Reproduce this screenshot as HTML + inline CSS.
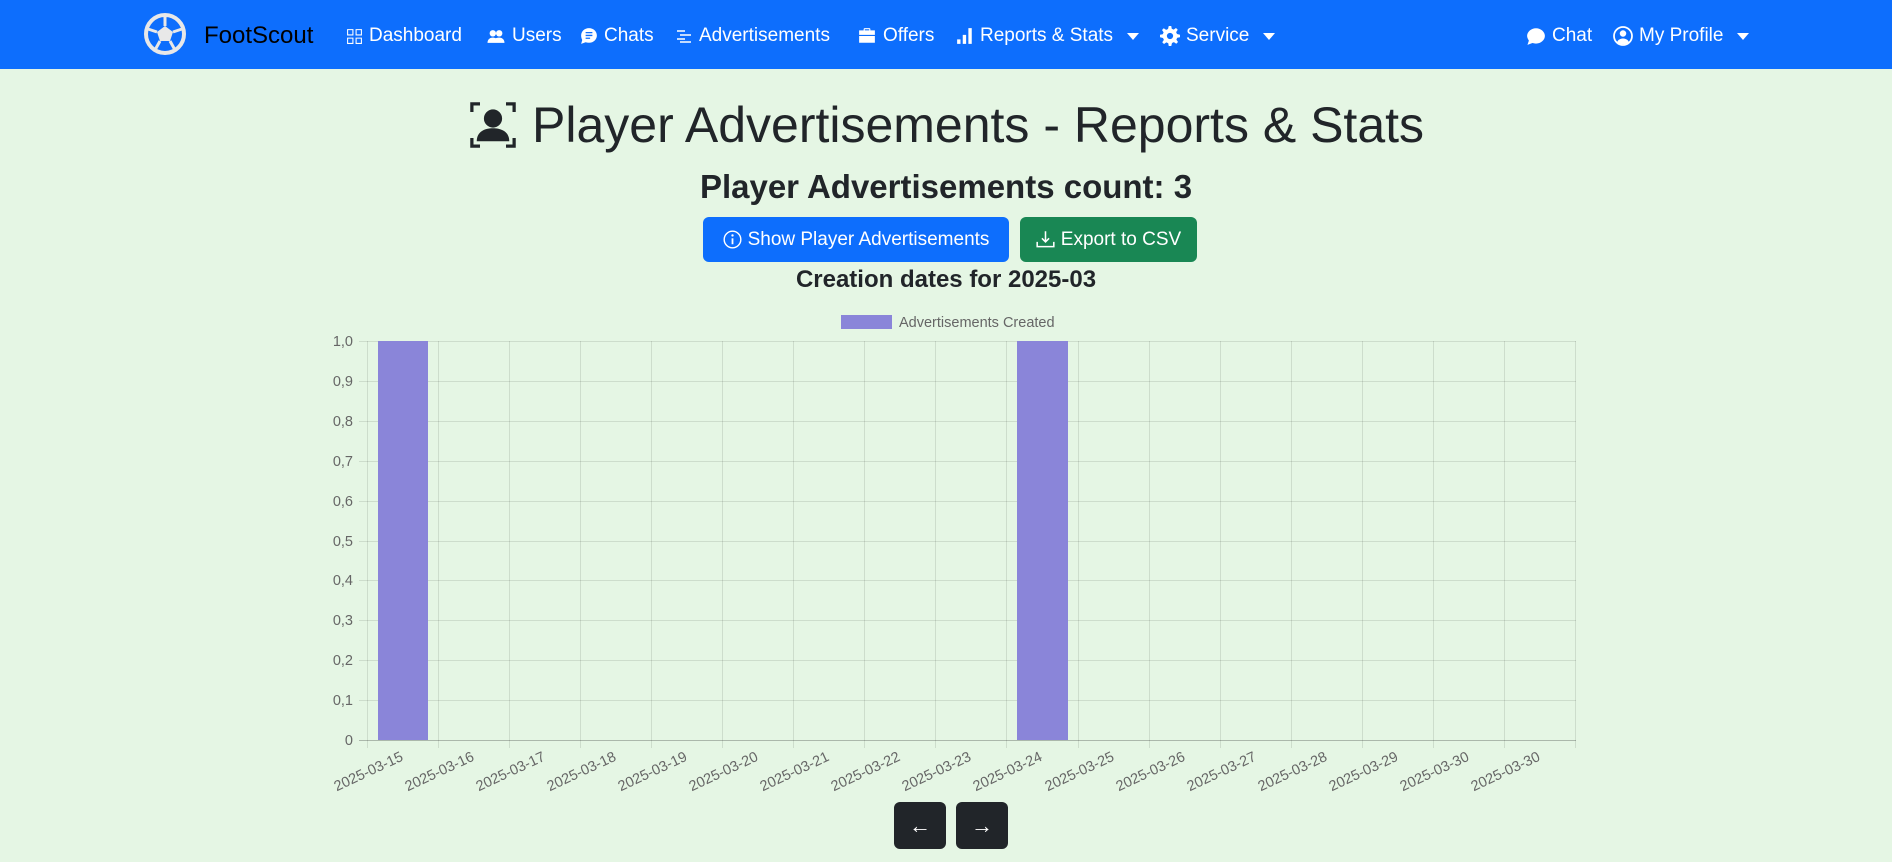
<!DOCTYPE html>
<html><head><meta charset="utf-8"><style>
*{box-sizing:border-box;margin:0;padding:0}
body{width:1892px;height:862px;overflow:hidden;background:#e5f6e4;font-family:"Liberation Sans",sans-serif;color:#212529}
nav{position:absolute;left:0;top:0;width:1892px;height:69px;background:#0d6efd;color:#fff}
.it{position:absolute;top:25px;font-size:19px;display:flex;align-items:center;gap:6px;white-space:nowrap}
.it svg{fill:#fff}
.caret{display:inline-block;border-left:6px solid transparent;border-right:6px solid transparent;border-top:7px solid #fff;margin-left:8px}
.c{position:absolute;left:0;width:1892px;text-align:center}
.btn{position:absolute;top:217px;height:45px;border-radius:6px;color:#fff;font-size:19px;display:flex;align-items:center;justify-content:center;gap:6px}
.nb{position:absolute;top:802px;width:52px;height:47px;background:#212529;border-radius:6px;color:#fff;font-size:22px;display:flex;align-items:center;justify-content:center}
</style></head><body>
<nav>
<svg style="position:absolute;left:144px;top:13px" width="42" height="42" viewBox="0 0 42 42"><circle cx="21" cy="21" r="19" fill="none" stroke="#e8e8e8" stroke-width="4"/><polygon points="21,13 29,19 26,28 16,28 13,19" fill="#e8e8e8"/><path d="M21 13V3M29 19l9-3M26 28l5 9M16 28l-5 9M13 19l-9-3" stroke="#e8e8e8" stroke-width="3"/></svg>
<div class="it" style="left:204px;top:22px;font-size:24px;color:#000">FootScout</div>
<div class="it" style="left:346px"><svg width="17" height="17" viewBox="0 0 16 16"><path d="M1 1h6v6H1zM2 2v4h4V2zM9 1h6v6H9zM10 2v4h4V2zM1 9h6v6H1zM2 10v4h4v-4zM9 9h6v6H9zM10 10v4h4v-4z"/></svg>Dashboard</div>
<div class="it" style="left:486px"><svg width="20" height="17" viewBox="0 0 16 16"><circle cx="5" cy="5" r="3"/><circle cx="11" cy="5" r="3"/><path d="M0 14c0-4 3-5 5-5s5 1 5 5zM9 14c0-2-.5-3-1.5-4.3C9 9 10 9 11 9c2 0 5 1 5 5z"/></svg>Users</div>
<div class="it" style="left:580px"><svg width="18" height="18" viewBox="0 0 16 16"><path d="M8 1c4 0 7 3 7 6.5S12 14 8 14c-1 0-2-.2-3-.5L1 15l1-3.5C1.4 10.3 1 9 1 7.5 1 4 4 1 8 1z"/><path d="M5 5h6M5 7.5h6M5 10h4" stroke="#0d6efd" stroke-width="1.2"/></svg>Chats</div>
<div class="it" style="left:675px"><svg width="18" height="16" viewBox="0 0 16 16"><path d="M1 3h8M4 7h11M1 11h8M4 14h11" stroke="#fff" stroke-width="1.4"/></svg>Advertisements</div>
<div class="it" style="left:857px"><svg width="20" height="18" viewBox="0 0 16 16"><path d="M6 1h4a1 1 0 011 1v1h4v4H1V3h4V2a1 1 0 011-1zm0 1v1h4V2zM1 8h14v6H1z"/></svg>Offers</div>
<div class="it" style="left:956px"><svg width="18" height="18" viewBox="0 0 16 16"><path d="M1 11h3v4H1zM6 7h3v8H6zM11 1h3v14h-3z"/></svg>Reports &amp; Stats<span class="caret"></span></div>
<div class="it" style="left:1160px"><svg width="20" height="20" viewBox="0 0 16 16"><path d="M7 0h2l.4 2.2 1.5.7 1.9-1.3 1.4 1.4-1.3 1.9.7 1.5L16 7v2l-2.2.4-.7 1.5 1.3 1.9-1.4 1.4-1.9-1.3-1.5.7L9 16H7l-.4-2.2-1.5-.7-1.9 1.3-1.4-1.4 1.3-1.9-.7-1.5L0 9V7l2.2-.4.7-1.5-1.3-1.9 1.4-1.4 1.9 1.3 1.5-.7zM8 5.5a2.5 2.5 0 100 5 2.5 2.5 0 000-5z"/></svg>Service<span class="caret"></span></div>
<div class="it" style="left:1526px"><svg width="20" height="19" viewBox="0 0 16 16"><path d="M8 1c4 0 7.5 3 7.5 6.5S12 14 8 14c-1 0-2-.2-3-.5L.8 15l1.2-3.5C1.3 10.3 .5 9 .5 7.5 .5 4 4 1 8 1z"/></svg>Chat</div>
<div class="it" style="left:1613px"><svg width="20" height="20" viewBox="0 0 16 16"><circle cx="8" cy="8" r="7.2" fill="none" stroke="#fff" stroke-width="1.4"/><circle cx="8" cy="6" r="2.6"/><path d="M3.3 12.8C4.2 10.8 6 10 8 10s3.8.8 4.7 2.8A6.5 6.5 0 018 14.6a6.5 6.5 0 01-4.7-1.8z"/></svg>My Profile<span class="caret"></span></div>
</nav>
<svg style="position:absolute;left:467px;top:99px" width="52" height="52" viewBox="0 0 16 16" fill="#212529"><path d="M1 1h3v1H2v2H1zM12 1h3v3h-1V2h-2zM1 12h1v2h2v1H1zM14 12h1v3h-3v-1h2z"/><circle cx="8" cy="6" r="2.8"/><path d="M3 13c0-3 2.5-4 5-4s5 1 5 4z"/></svg>
<div style="position:absolute;left:532px;top:94px;font-size:50px;line-height:62px;white-space:nowrap">Player Advertisements - Reports &amp; Stats</div>
<div class="c" style="top:166px;font-size:33px;font-weight:bold;line-height:42px">Player Advertisements count: 3</div>
<div class="btn" style="left:703px;width:306px;background:#0d6efd"><svg width="19" height="19" viewBox="0 0 16 16"><circle cx="8" cy="8" r="7" fill="none" stroke="#fff" stroke-width="1.2"/><circle cx="8" cy="4.6" r="1" fill="#fff"/><path d="M8 7v5" stroke="#fff" stroke-width="1.5"/></svg>Show Player Advertisements</div>
<div class="btn" style="left:1020px;width:177px;background:#198754"><svg width="19" height="19" viewBox="0 0 16 16" fill="none" stroke="#fff" stroke-width="1.3"><path d="M1 10v4h14v-4M8 1v9M5 7l3 3 3-3"/></svg>Export to CSV</div>
<div class="c" style="top:264px;font-size:24px;font-weight:bold;line-height:32px">Creation dates for 2025-03</div>
<svg style="position:absolute;left:0;top:0" width="1892" height="862" font-family="Liberation Sans" font-size="14.5" fill="#666">
<rect x="841" y="315" width="51" height="14" fill="#8a85d9"/>
<text x="899" y="327">Advertisements Created</text>
<g stroke="rgba(0,0,0,0.1)" stroke-width="1">
<path d="M359 341.5H1576M359 381.5H1576M359 421.5H1576M359 461.5H1576M359 501.5H1576M359 541.5H1576M359 580.5H1576M359 620.5H1576M359 660.5H1576M359 700.5H1576"/>
<path d="M367.5 341V748M438.5 341V748M509.5 341V748M580.5 341V748M651.5 341V748M722.5 341V748M793.5 341V748M864.5 341V748M935.5 341V748M1006.5 341V748M1078.5 341V748M1149.5 341V748M1220.5 341V748M1291.5 341V748M1362.5 341V748M1433.5 341V748M1504.5 341V748M1575.5 341V748"/>
</g>
<path d="M359 740.5H1576" stroke="rgba(0,0,0,0.25)"/>
<rect x="378" y="341" width="50" height="399" fill="#8a85d9"/>
<rect x="1017" y="341" width="51" height="399" fill="#8a85d9"/>
<g text-anchor="end">
<text x="353" y="346">1,0</text><text x="353" y="386">0,9</text><text x="353" y="426">0,8</text><text x="353" y="466">0,7</text><text x="353" y="506">0,6</text><text x="353" y="546">0,5</text><text x="353" y="585">0,4</text><text x="353" y="625">0,3</text><text x="353" y="665">0,2</text><text x="353" y="705">0,1</text><text x="353" y="745">0</text>
<text transform="translate(404,760) rotate(-25)">2025-03-15</text>
<text transform="translate(475,760) rotate(-25)">2025-03-16</text>
<text transform="translate(546,760) rotate(-25)">2025-03-17</text>
<text transform="translate(617,760) rotate(-25)">2025-03-18</text>
<text transform="translate(688,760) rotate(-25)">2025-03-19</text>
<text transform="translate(759,760) rotate(-25)">2025-03-20</text>
<text transform="translate(830,760) rotate(-25)">2025-03-21</text>
<text transform="translate(901,760) rotate(-25)">2025-03-22</text>
<text transform="translate(972,760) rotate(-25)">2025-03-23</text>
<text transform="translate(1043,760) rotate(-25)">2025-03-24</text>
<text transform="translate(1115,760) rotate(-25)">2025-03-25</text>
<text transform="translate(1186,760) rotate(-25)">2025-03-26</text>
<text transform="translate(1257,760) rotate(-25)">2025-03-27</text>
<text transform="translate(1328,760) rotate(-25)">2025-03-28</text>
<text transform="translate(1399,760) rotate(-25)">2025-03-29</text>
<text transform="translate(1470,760) rotate(-25)">2025-03-30</text>
<text transform="translate(1541,760) rotate(-25)">2025-03-30</text>
</g>
</svg>
<div class="nb" style="left:894px">←</div>
<div class="nb" style="left:956px">→</div>
</body></html>
